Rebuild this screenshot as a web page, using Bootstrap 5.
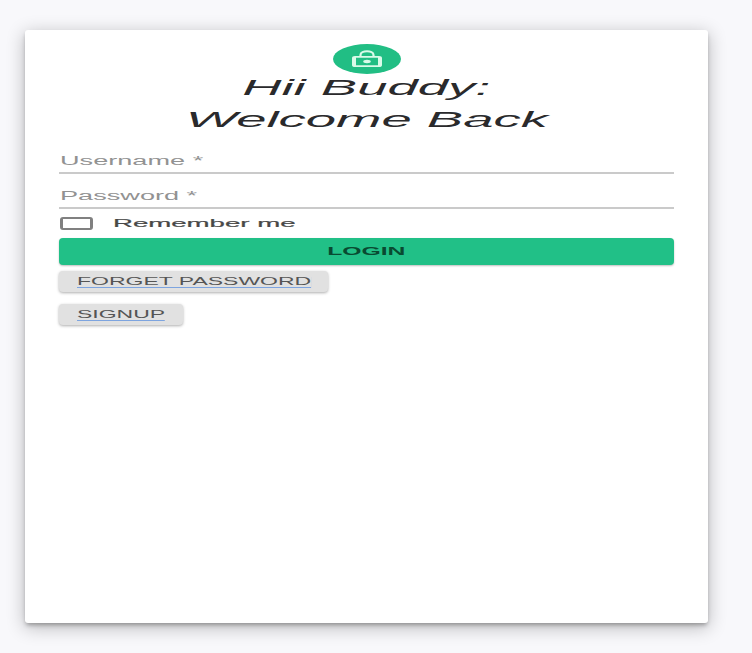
<!DOCTYPE html>
<html lang="en">
<head>
<meta charset="utf-8">
<meta name="viewport" content="width=device-width, initial-scale=1">
<title>Login</title>
<link href="https://cdn.jsdelivr.net/npm/bootstrap@5.3.0/dist/css/bootstrap.min.css" rel="stylesheet">
<style>
body{background:#f8f8fb;font-family:"Liberation Sans",Arial,sans-serif;line-height:1;min-height:100vh;padding:30px 0 0 25px}
.login-card{width:683px;height:593px;padding:14px 34px 0;border:0;border-radius:3px;box-shadow:0 3px 4px -1px rgba(0,0,0,.3),0 4px 18px 1px rgba(0,0,0,.24)}
.avatar{width:68px;height:30px;border-radius:50%;background:#21be84}
.wide{display:inline-block;white-space:nowrap;transform:scaleX(2.4);transform-origin:left center}
.mid{transform-origin:center}
.title{font-size:22.5px;font-style:italic;line-height:32px;color:#2a2a2c;margin:-2px 0 0;font-weight:400}
.title .wide{transform:scaleX(2.42)}
.field{border-bottom:2px solid #cacaca;color:#929292;font-size:12px}
.f-user{height:38px;padding-top:19px}
.f-pass{height:35px;padding-top:16px}
.field .wide{transform:translateX(1px) scaleX(2.26)}
.remember{height:29px;color:#484848;font-size:11.5px}
.remember .wide{-webkit-text-stroke:.2px #484848}
.check{width:33px;height:13px;border:2px solid #808080;border-left-width:3px;border-right-width:3px;border-radius:3px;margin:0 20px 0 1px}
.btn-login{height:27px;border-radius:4px;background:#21c087;color:#094a31;font-size:10.3px;font-weight:700;box-shadow:0 1px 2px rgba(0,0,0,.25)}
.btn-grey{height:21px;padding:0 0 1px 18px;border-radius:4px;background:#e1e1e1;color:#555;font-size:11px;box-shadow:0 1px 3px rgba(0,0,0,.32)}
.btn-grey .wide{box-shadow:0 1px 0 #7da4df;height:11px;line-height:11px;transform:scaleX(2.09)}
.btn-forget{width:269px;margin-top:6px}
.btn-signup{width:124px;margin-top:12px}
</style>
<script src="https://cdn.jsdelivr.net/npm/bootstrap@5.3.0/dist/js/bootstrap.bundle.min.js"></script>
</head>
<body>
<main class="card login-card">
  <div class="avatar mx-auto d-flex align-items-center justify-content-center">
    <svg width="30" height="18" viewBox="0 0 30 18" fill="none">
      <path fill="#d9fbe9" fill-rule="evenodd" d="M3 6H27Q30 6 30 8V15Q30 17 27 17H3Q0 17 0 15V8Q0 6 3 6ZM4 7.800V15.200H26V7.800Z"/>
      <path d="M8.500 6.600V5C8.500 0 21.500 0 21.500 5V6.600" stroke="#d9fbe9" stroke-width="2.200"/>
      <ellipse cx="15" cy="11.500" rx="3.800" ry="1.700" fill="#d9fbe9"/>
    </svg>
  </div>
  <h1 class="title text-center"><span class="wide mid">Hii Buddy:</span><br><span class="wide mid">Welcome Back</span></h1>
  <div class="field f-user"><span class="wide">Username *</span></div>
  <div class="field f-pass"><span class="wide">Password *</span></div>
  <label class="remember d-flex align-items-center"><span class="check"></span><span class="wide">Remember me</span></label>
  <button class="btn btn-login w-100 p-0 border-0 d-flex align-items-center justify-content-center"><span class="wide mid">LOGIN</span></button>
  <a href="#" class="btn-grey btn-forget d-flex align-items-center text-decoration-none"><span class="wide">FORGET PASSWORD</span></a>
  <a href="#" class="btn-grey btn-signup d-flex align-items-center text-decoration-none"><span class="wide">SIGNUP</span></a>
</main>
</body>
</html>
